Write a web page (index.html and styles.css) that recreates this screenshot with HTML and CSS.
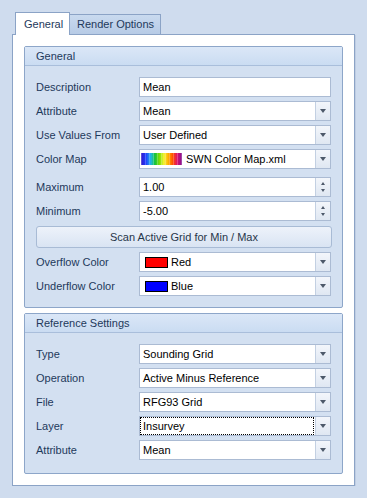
FILE: index.html
```html
<!DOCTYPE html>
<html lang="en">
<head>
  <meta charset="UTF-8" />
  <title>Grid Layer Properties</title>
  <link rel="stylesheet" href="styles.css">
</head>
<body>

  <div class="tabs">
    <div class="tab active">General</div>
    <div class="tab">Render Options</div>
  </div>

  <div class="panel">
    <div class="group">
      <div class="group-head">General</div>
      <div class="group-body">
        <div class="row">
          <span class="label">Description</span>
          <div class="field"><span class="value">Mean</span></div>
        </div>
        <div class="row">
          <span class="label">Attribute</span>
          <div class="field"><span class="value">Mean</span><span class="drop"></span></div>
        </div>
        <div class="row">
          <span class="label">Use Values From</span>
          <div class="field"><span class="value">User Defined</span><span class="drop"></span></div>
        </div>
        <div class="row wide">
          <span class="label">Color Map</span>
          <div class="field"><span class="value map"><span class="rainbow"></span>SWN Color Map.xml</span><span class="drop"></span></div>
        </div>
        <div class="row">
          <span class="label">Maximum</span>
          <div class="field"><span class="value">1.00</span><span class="spin"><i class="up"></i><i class="down"></i></span></div>
        </div>
        <div class="row before-btn">
          <span class="label">Minimum</span>
          <div class="field"><span class="value">-5.00</span><span class="spin"><i class="up"></i><i class="down"></i></span></div>
        </div>
        <button class="scan">Scan Active Grid for Min / Max</button>
        <div class="row">
          <span class="label">Overflow Color</span>
          <div class="field"><span class="value swatch-row"><span class="swatch red"></span>Red</span><span class="drop"></span></div>
        </div>
        <div class="row last">
          <span class="label">Underflow Color</span>
          <div class="field"><span class="value swatch-row"><span class="swatch blue"></span>Blue</span><span class="drop"></span></div>
        </div>
      </div>
    </div>

    <div class="group ref">
      <div class="group-head">Reference Settings</div>
      <div class="group-body">
        <div class="row">
          <span class="label">Type</span>
          <div class="field"><span class="value">Sounding Grid</span><span class="drop"></span></div>
        </div>
        <div class="row">
          <span class="label">Operation</span>
          <div class="field"><span class="value">Active Minus Reference</span><span class="drop"></span></div>
        </div>
        <div class="row">
          <span class="label">File</span>
          <div class="field"><span class="value">RFG93 Grid</span><span class="drop"></span></div>
        </div>
        <div class="row">
          <span class="label">Layer</span>
          <div class="field"><span class="value focused">Insurvey</span><span class="drop"></span></div>
        </div>
        <div class="row last">
          <span class="label">Attribute</span>
          <div class="field"><span class="value">Mean</span><span class="drop"></span></div>
        </div>
      </div>
    </div>
  </div>

</body>
</html>
```

FILE: styles.css
```css
:root {
  --fondo: #cfdcee;
  --borde: #8ba3c6;
  --borde-campo: #abbbd3;
  --texto: #1e395b;
  --fuente: "Liberation Sans", Arial, sans-serif;
}

* {
  margin: 0;
  padding: 0;
  box-sizing: border-box;
}

body {
  background: var(--fondo);
  font-family: var(--fuente);
  font-size: 11px;
  color: var(--texto);
  padding: 12px 0 0 12px;
}

/* tabs */

.tabs {
  display: flex;
  align-items: flex-end;
  height: 22px;
  margin-left: 3px;
}

.tab {
  height: 20px;
  line-height: 19px;
  width: 91px;
  padding-left: 7px;
  border: 1px solid var(--borde);
  border-left: none;
  border-bottom: none;
  background: linear-gradient(#c9daef, #b7cbe6);
}

.tab.active {
  position: relative;
  z-index: 1;
  width: 55px;
  height: 23px;
  line-height: 22px;
  padding-left: 8px;
  margin-bottom: -1px;
  border-left: 1px solid var(--borde);
  background: #fff;
}

/* panel */

.panel {
  width: 343px;
  border: 1px solid var(--borde);
  background: #fff;
  padding: 11px;
  box-shadow: 1px 1px 0 #bfcde2;
}

.group {
  border: 1px solid #8da6c9;
  border-radius: 2px;
  background: #d3e0f1;
}

.group.ref {
  margin-top: 5px;
}

.group-head {
  height: 19px;
  line-height: 18px;
  padding-left: 11px;
  border-bottom: 1px solid #a9bedb;
  background: linear-gradient(#dbe7f7, #cadcf2);
}

.group-body {
  padding: 11px 10px 11px 11px;
}

.ref .group-body {
  padding-bottom: 13px;
}

/* rows */

.row {
  display: flex;
  align-items: center;
  height: 20px;
  margin-bottom: 4px;
}

.row.wide {
  margin-bottom: 8px;
}

.row.before-btn {
  margin-bottom: 5px;
}

.row.last {
  margin-bottom: 0;
}

.label {
  flex: 0 0 103px;
}

.field {
  display: flex;
  align-items: stretch;
  width: 192px;
  height: 20px;
  border: 1px solid var(--borde-campo);
  background: #fff;
  color: #000;
}

.value {
  flex: 1;
  display: flex;
  align-items: center;
  padding-left: 3px;
  white-space: nowrap;
}

.value.map {
  padding-left: 1px;
}

.value.swatch-row {
  padding-left: 5px;
}

.value.focused {
  margin: 0 1px 0 0;
  border: 1px dotted #000;
  padding-left: 2px;
}

.rainbow {
  width: 41px;
  height: 12px;
  margin-right: 4px;
  background:
    repeating-linear-gradient(to right, rgba(255, 255, 255, 0.22) 0 1px, transparent 1px 4px),
    linear-gradient(to right, #3418c8, #1f3cff 12%, #1fb8e8 24%, #12c23a 34%, #86e000 46%, #f6f437 56%, #ffb300 66%, #ff4a00 78%, #e0106a 88%, #7e1394);
}

.swatch {
  width: 23px;
  height: 11px;
  margin-right: 3px;
  border: 1px solid #000;
}

.swatch.red {
  background: #ff0000;
}

.swatch.blue {
  background: #0000ff;
}

/* drop and spin buttons */

.drop,
.spin {
  flex: 0 0 15px;
  border-left: 1px solid #c3d0e2;
  background: linear-gradient(#f3f6fb, #dfe7f2);
}

.drop {
  display: flex;
  align-items: center;
  justify-content: center;
}

.drop::after {
  content: "";
  border-left: 3.5px solid transparent;
  border-right: 3.5px solid transparent;
  border-top: 4px solid #4d596a;
}

.spin {
  display: flex;
  flex-direction: column;
  align-items: center;
  justify-content: center;
  gap: 4px;
}

.spin i {
  width: 0;
  height: 0;
  border-left: 2.5px solid transparent;
  border-right: 2.5px solid transparent;
}

.spin .up {
  border-bottom: 3px solid #4d596a;
}

.spin .down {
  border-top: 3px solid #4d596a;
}

/* button */

.scan {
  display: block;
  width: 100%;
  height: 22px;
  margin-bottom: 4px;
  border: 1px solid #a8bbd5;
  border-radius: 3px;
  background: linear-gradient(#edf2fa, #d9e4f3);
  font-family: var(--fuente);
  font-size: 11px;
  color: #27364a;
}
```
